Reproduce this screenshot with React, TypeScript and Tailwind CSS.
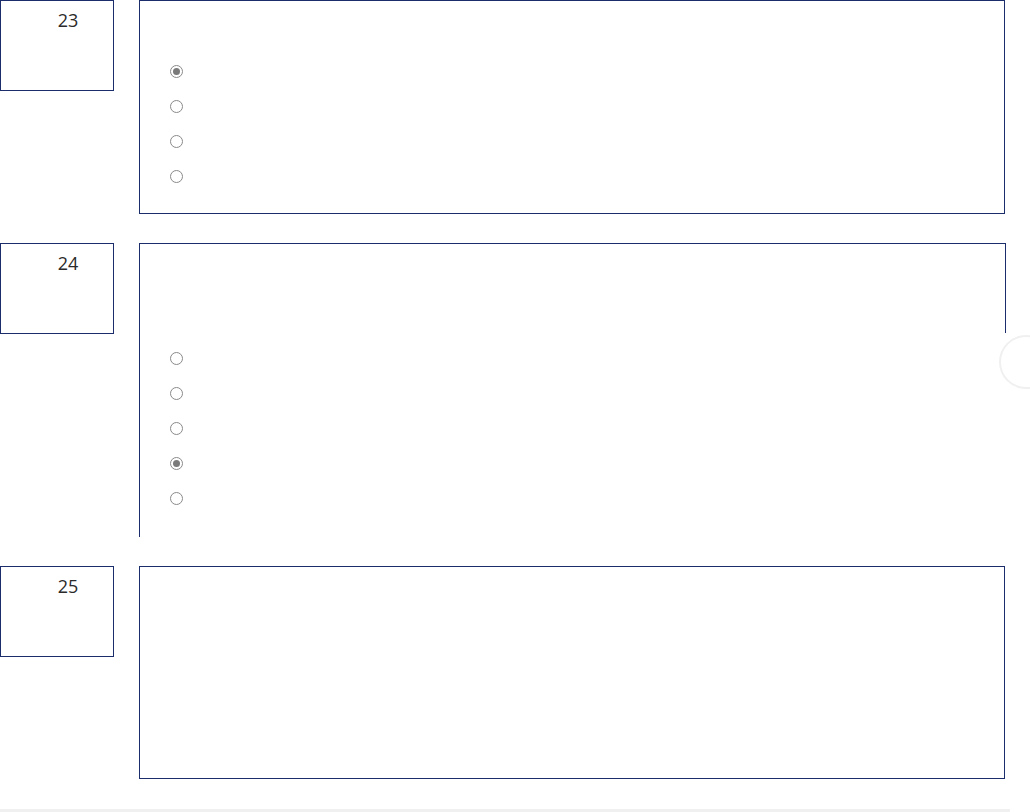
const QUESTIONS = [
  { num: 23, padTop: "pt-[64px]", options: 4, checked: 0, box: "border h-[214px]" },
  { num: 24, padTop: "pt-[108px]", options: 5, checked: 3, box: "border-t border-l h-[294px]" },
  { num: 25, padTop: "pt-[64px]", options: 0, checked: -1, box: "border h-[213px]" },
] as const;

function Radio({ checked }: { checked: boolean }) {
  return (
    <span className="flex items-center justify-center size-[13px] rounded-full border border-[#8a8a8a] bg-white">
      {checked && <span className="block size-[7px] rounded-full bg-[#7a7a7a]" />}
    </span>
  );
}

export default function App() {
  return (
    <div className="relative w-[1030px] h-[812px] overflow-hidden bg-white font-['Open_Sans',sans-serif]">
      <div className="flex flex-col gap-[29px]">
        {QUESTIONS.map((q) => (
          <div key={q.num} className="flex gap-[25px]">
            {/* Number box */}
            <div className="w-[114px] h-[91px] shrink-0 border border-[#1b2d6b] pl-[22px] pt-[6px] text-center text-[18px] leading-[26px] text-[#2a2a2a]">
              {q.num}
            </div>

            {/* Question body */}
            <div className={`relative w-[866px] border-[#1b2d6b] ${q.box} ${q.padTop} pl-[30px]`}>
              {q.num === 24 && (
                <span className="absolute right-[-1px] top-[-1px] h-[90px] w-px bg-[#1b2d6b]" />
              )}
              <div className="flex flex-col gap-[22px]">
                {Array.from({ length: q.options }).map((_, i) => (
                  <Radio key={i} checked={i === q.checked} />
                ))}
              </div>
            </div>
          </div>
        ))}
      </div>

      {/* Floating help button, mostly off-screen */}
      <span className="absolute left-[999px] top-[335px] size-[54px] rounded-full border-2 border-[#f0f0f0]" />

      {/* Footer edge */}
      <div className="absolute left-0 top-[809px] w-[1010px] h-[3px] bg-[#f0f0f0]" />
    </div>
  );
}
